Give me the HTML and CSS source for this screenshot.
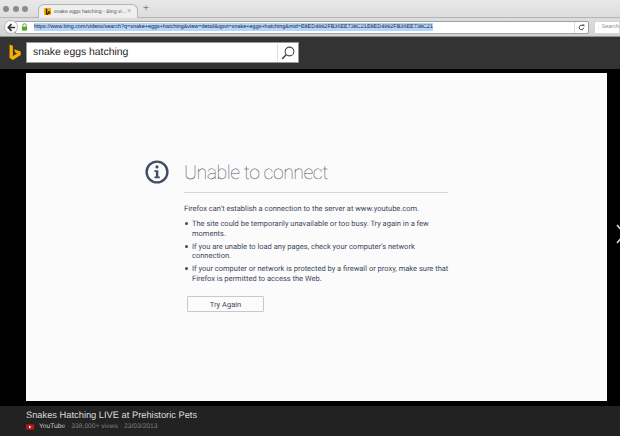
FILE: index.html
```html
<!DOCTYPE html>
<html lang="en">
<head>
<meta charset="utf-8">
<title>snake eggs hatching - Bing videos</title>
<link rel="stylesheet" href="styles.css">
</head>
<body>
<div class="browser">
  <div class="tabbar">
    <div class="lights"><i></i><i></i><i></i></div>
    <div class="tab">
      <span class="favicon"><svg viewBox="0 0 7 9" width="6" height="8"><path d="M1 0.5 L2.6 1 V6 L4.6 4.9 L3.6 4.4 L3.1 3 L6.3 4.2 V5.7 L2.6 8 L1 7 Z" fill="#3a2a00"/></svg></span>
      <span class="tabtitle">snake eggs hatching - Bing vi...</span>
      <span class="tabclose">×</span>
    </div>
    <span class="newtab">+</span>
  </div>
  <div class="navbar">
    <span class="back"><svg viewBox="0 0 10 10" width="9" height="9"><path d="M5 1.2 L1.5 5 L5 8.8 M1.8 5 H9" fill="none" stroke="#333" stroke-width="1.9"/></svg></span>
    <div class="urlbar">
      <svg class="lock" viewBox="0 0 8 9" width="7" height="8"><path d="M2 4 V2.8 a2 2 0 0 1 4 0 V4" fill="none" stroke="#4c9a2a" stroke-width="1.1"/><rect x="1" y="4" width="6" height="4.6" fill="#57a832"/></svg>
      <span class="urlwrap"><span class="url">https://www.bing.com/videos/search?q=snake+eggs+hatching&amp;view=detail&amp;qpvt=snake+eggs+hatching&amp;mid=E8ED4992FB36EE738C21E8ED4992FB36EE738C21</span></span>
      <span class="reload"><svg viewBox="0 0 10 10" width="7" height="7"><path d="M8 5.5 A3.2 3.2 0 1 1 7 2.6" fill="none" stroke="#333" stroke-width="1.3"/><path d="M5.8 0.6 H9 V3.8 Z" fill="#333"/></svg></span>
    </div>
    <div class="searchbar">
      <svg viewBox="0 0 10 10" width="7" height="7"><circle cx="4" cy="4" r="2.9" fill="none" stroke="#8a8a8a"/><path d="M6.2 6.2 L9 9" stroke="#8a8a8a" stroke-width="1.1"/></svg>
      <span>Search</span>
    </div>
  </div>
</div>
<header class="binghead">
  <svg class="binglogo" viewBox="0 0 12 17" width="12" height="17"><path d="M0.5 0.5 L3.9 1.7 V11.9 L8.2 9.5 L6.2 8.5 L4.9 5.2 L11.7 7.6 V11 L3.9 15.9 L0.5 14 Z" fill="#f5b000"/></svg>
  <div class="searchbox">
    <span class="query">snake eggs hatching</span>
    <span class="searchbtn"><svg viewBox="0 0 16 16" width="14" height="14"><circle cx="9.7" cy="6.3" r="5" fill="none" stroke="#444" stroke-width="1.2"/><path d="M6.2 9.8 L1.2 14.8" stroke="#444" stroke-width="1.7"/></svg></span>
  </div>
</header>
<main class="stage">
  <div class="frame">
    <div class="error">
      <svg class="infoicon" viewBox="0 0 24 24" width="24" height="24"><circle cx="12" cy="12" r="10.4" fill="none" stroke="#414f63" stroke-width="2.4"/><circle cx="12" cy="6.9" r="1.6" fill="#414f63"/><path d="M9.4 10.3 H13.3 V16.6 H14.8 V18.2 H9.4 V16.6 H10.9 V11.9 H9.4 Z" fill="#414f63"/></svg>
      <div class="errorbody">
        <h1>Unable to connect</h1>
        <p>Firefox can’t establish a connection to the server at www.youtube.com.</p>
        <ul>
          <li>The site could be temporarily unavailable or too busy. Try again in a few moments.</li>
          <li>If you are unable to load any pages, check your computer’s network connection.</li>
          <li>If your computer or network is protected by a firewall or proxy, make sure that Firefox is permitted to access the Web.</li>
        </ul>
        <button class="retry">Try Again</button>
      </div>
    </div>
  </div>
  <svg class="nextarrow" viewBox="0 0 10 20" width="10" height="20"><path d="M1 1 L8.5 10 L1 19" fill="none" stroke="#d8d8d8" stroke-width="1.6"/></svg>
</main>
<footer class="foot">
  <div class="foottitle">Snakes Hatching LIVE at Prehistoric Pets</div>
  <div class="footmeta">
    <span class="yt"><svg viewBox="0 0 9 6" width="8" height="6"><rect width="9" height="6" rx="1" fill="#b8141b"/><path d="M3.4 1.4 L6 3 L3.4 4.6 Z" fill="#fff"/></svg></span>
    <span class="source">YouTube</span>
    <span class="stats">· 338,000+ views · 23/03/2013</span>
  </div>
</footer>
</body>
</html>
```
FILE: styles.css
```css
* { box-sizing: border-box; }
html, body { margin: 0; padding: 0; }
body {
  width: 620px;
  height: 436px;
  overflow: hidden;
  display: flex;
  flex-direction: column;
  background: #000;
  font-family: "Liberation Sans", Arial, sans-serif;
  text-rendering: geometricPrecision;
}
.browser {
  flex: 0 0 37px;
  height: 37px;
  background: linear-gradient(#e8e8e8, #d2d2d2);
  display: flex;
  flex-direction: column;
  border-bottom: 1px solid #8f8f8f;
}
.tabbar {
  height: 18px;
  display: flex;
  align-items: flex-end;
  border-bottom: 1px solid #b5b5b5;
}
.lights {
  display: flex;
  gap: 3.5px;
  padding: 0 0 5px 3px;
  width: 38px;
}
.lights i {
  width: 6px;
  height: 6px;
  border-radius: 50%;
  background: #8b8b8b;
}
.tab {
  width: 100px;
  height: 14px;
  margin-bottom: -1px;
  background: #efefef;
  border: 1px solid #b5b5b5;
  border-bottom: 0;
  border-radius: 6px 6px 0 0;
  display: flex;
  align-items: center;
  padding: 0 5px;
  gap: 3px;
  color: #555;
  font-size: 5.2px;
}
.favicon {
  flex: 0 0 7px;
  height: 7px;
  background: #f5b000;
  display: flex;
  align-items: center;
  justify-content: center;
}
.tabtitle { flex: 1; min-width: 0; white-space: nowrap; }
.tabclose { flex: 0 0 5px; color: #999; font-size: 7px; line-height: 7px; }
.newtab {
  color: #777;
  font-size: 10px;
  line-height: 12px;
  padding: 0 0 2px 5px;
}
.navbar {
  flex: 1;
  display: flex;
  align-items: center;
  padding: 0 0 0 4px;
}
.back {
  flex: 0 0 14px;
  height: 14px;
  border-radius: 50%;
  background: #fdfdfd;
  border: 1px solid #b5b5b5;
  display: flex;
  align-items: center;
  justify-content: center;
  z-index: 1;
}
.urlbar {
  flex: 0 0 574px;
  height: 13px;
  margin-left: -3px;
  background: #fff;
  border: 1px solid #a0a0a0;
  border-radius: 0 2px 2px 0;
  display: flex;
  align-items: center;
  padding-left: 5px;
  min-width: 0;
}
.lock { flex: 0 0 7px; margin-right: 6px; }
.urlwrap { flex: 1; min-width: 0; white-space: nowrap; overflow: hidden; display: flex; }
.url {
  font-size: 5.47px;
  color: #223;
  line-height: 8px;
  background: #b5d5fb;
}
.reload {
  flex: 0 0 14px;
  height: 11px;
  border-left: 1px solid #ddd;
  display: flex;
  align-items: center;
  justify-content: center;
}
.searchbar {
  flex: 1;
  height: 13px;
  margin-left: 5px;
  background: #fff;
  border: 1px solid #d5d5d5;
  border-radius: 2px 0 0 2px;
  display: flex;
  align-items: center;
  padding-left: 3px;
  gap: 2px;
  font-size: 5.5px;
  color: #888;
  overflow: hidden;
  white-space: nowrap;
}
.binghead {
  flex: 0 0 32px;
  background: #333;
  display: flex;
  align-items: center;
  padding-left: 9px;
  gap: 5px;
}
.binglogo { margin-top: -1px; }
.searchbox {
  width: 273px;
  height: 21px;
  background: #fff;
  border: 1px solid #999;
  display: flex;
  align-items: center;
  margin-top: -1px;
}
.query {
  flex: 1;
  padding-left: 6px;
  font-size: 10.4px;
  color: #222;
}
.searchbtn {
  flex: 0 0 21px;
  height: 17px;
  border-left: 1px solid #ddd;
  display: flex;
  align-items: center;
  justify-content: center;
}
.stage {
  flex: 0 0 337px;
  background: #000;
  padding: 4px 13px 5px 26px;
  display: flex;
  align-items: center;
  overflow: hidden;
}
.frame {
  flex: 0 0 581px;
  height: 328px;
  background: #fbfbfb;
  display: flex;
  flex-direction: column;
  padding: 87px 0 0 119px;
}
.error { display: flex; gap: 15px; }
.infoicon { flex: 0 0 24px; }
.errorbody {
  width: 264px;
  color: #3d4a5c;
  font-family: Roboto, sans-serif;
  font-size: 7.5px;
  line-height: 9.6px;
}
h1 {
  margin: 0;
  padding: 0 0 7px;
  border-bottom: 1px solid #d6d6d6;
  font-family: Roboto, sans-serif;
  font-weight: 100;
  font-size: 19.5px;
  letter-spacing: -0.5px;
  line-height: 25px;
  color: #444c58;
}
p { margin: 10.5px 0 0; }
ul {
  list-style: none;
  margin: 6px 0 0;
  padding: 0;
  display: flex;
  flex-direction: column;
  gap: 3.4px;
}
li { padding-left: 8px; margin-right: -4px; position: relative; }
li::before {
  content: "";
  position: absolute;
  left: 1px;
  top: 3px;
  width: 3px;
  height: 3px;
  border-radius: 50%;
  background: #3d4a5c;
}
.retry {
  display: block;
  margin: 13px 0 0 3px;
  width: 77px;
  height: 16px;
  padding: 0;
  background: #fbfbfb;
  border: 1px solid #c9c9c9;
  border-radius: 1px;
  color: #3d4a5c;
  font-family: Roboto, sans-serif;
  font-size: 7.5px;
}
.nextarrow { flex: 0 0 10px; margin: 0 0 0 9px; position: relative; top: -3px; }
.foot {
  flex: 0 0 30px;
  background: #222;
  padding: 2px 0 0 26px;
}
.foottitle {
  color: #ddd;
  font-size: 9.3px;
  line-height: 14px;
}
.footmeta {
  display: flex;
  align-items: center;
  font-size: 6.7px;
  line-height: 10px;
}
.yt { flex: 0 0 13px; display: flex; align-items: center; }
.source { color: #ccc; }
.stats { color: #808080; margin-left: 2px; }
```
